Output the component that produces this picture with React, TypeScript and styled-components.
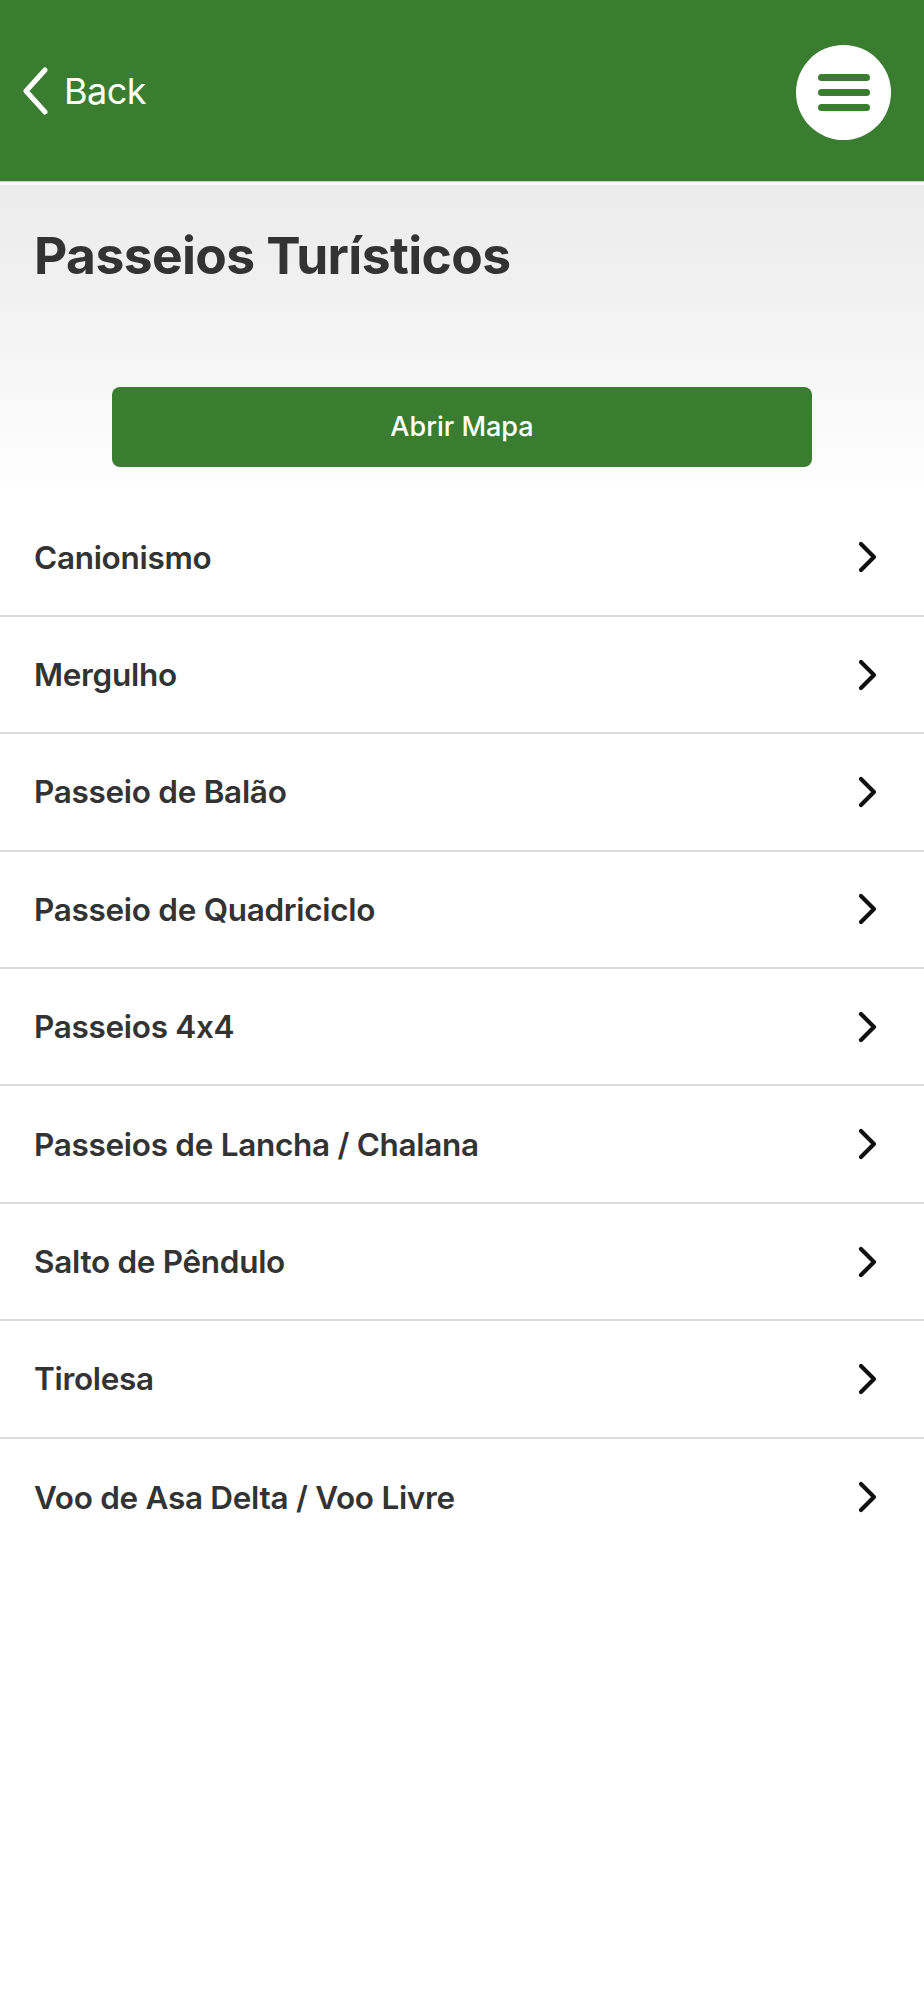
import React from "react";
import styled, { createGlobalStyle } from "styled-components";

const GREEN = "#3a7d31";

const GlobalStyle = createGlobalStyle`
  html, body { margin: 0; padding: 0; background: #ffffff; }
  body { font-family: Inter, "Noto Sans", "Liberation Sans", sans-serif; -webkit-font-smoothing: antialiased; }
  * { box-sizing: border-box; }
`;

const Page = styled.div`
  width: 924px;
  min-height: 2000px;
  background: #ffffff;
  display: flex;
  flex-direction: column;
`;

const Header = styled.header`
  height: 182px;
  background: ${GREEN};
  border-bottom: 1px solid #c4cbc2;
  display: flex;
  align-items: center;
  justify-content: space-between;
  padding: 0 33px 0 21px;
`;

const BackButton = styled.button`
  display: flex;
  align-items: center;
  gap: 15px;
  background: none;
  border: none;
  padding: 0;
  margin-top: 1px;
  color: #ffffff;
  font-family: Inter, "Liberation Sans", sans-serif;
  font-size: 36px;
  font-weight: 400;
  letter-spacing: -0.5px;
  cursor: pointer;
`;

const MenuButton = styled.button`
  width: 95px;
  height: 95px;
  border-radius: 50%;
  background: #ffffff;
  border: none;
  padding: 0;
  display: flex;
  flex-direction: column;
  align-items: center;
  justify-content: center;
  gap: 8px;
  margin-top: 3px;
  cursor: pointer;
`;

const MenuLine = styled.span`
  display: block;
  width: 52px;
  height: 7px;
  border-radius: 4px;
  background: ${GREEN};
`;

const Hero = styled.section`
  border-top: 3px solid #fbfbfb;
  background: linear-gradient(to bottom, #ebebeb 0%, #f3f3f3 45%, #ffffff 100%);
  height: 317.5px;
  padding: 40px 0 0 0;
  display: flex;
  flex-direction: column;
`;

const Title = styled.h1`
  margin: 0 0 0 34px;
  font-family: Inter, "Liberation Sans", sans-serif;
  font-size: 51.5px;
  line-height: 60px;
  font-weight: 700;
  letter-spacing: -0.6px;
  color: #333333;
`;

const MapButton = styled.button`
  align-self: center;
  margin-top: 101.5px;
  width: 700px;
  height: 80px;
  border: none;
  border-radius: 8px;
  background: ${GREEN};
  color: #ffffff;
  font-family: Inter, "Liberation Sans", sans-serif;
  font-size: 27px;
  font-weight: 500;
  cursor: pointer;
`;

const List = styled.ul`
  list-style: none;
  margin: 0;
  padding: 0;
`;

const Row = styled.li<{ $last?: boolean }>`
  height: 117.4px;
  display: flex;
  align-items: center;
  justify-content: space-between;
  padding: 0 46px 0 34px;
  border-bottom: ${(p) => (p.$last ? "none" : "2px solid #dcdcdc")};
`;

const RowLabel = styled.span`
  font-family: Inter, "Liberation Sans", sans-serif;
  font-size: 31.5px;
  font-weight: 600;
  letter-spacing: -0.3px;
  color: #333333;
`;

const BackChevron = () => (
  <svg width="28" height="48" viewBox="0 0 28 48" fill="none">
    <path d="M24 3 L5 24 L24 45" stroke="#ffffff" strokeWidth="5" strokeLinecap="round" strokeLinejoin="round" />
  </svg>
);

const RowChevron = () => (
  <svg width="20" height="32" viewBox="0 0 20 32" fill="none">
    <path d="M3 3 L16 16 L3 29" stroke="#111111" strokeWidth="4.2" strokeLinecap="round" strokeLinejoin="round" />
  </svg>
);

const items = [
  "Canionismo",
  "Mergulho",
  "Passeio de Balão",
  "Passeio de Quadriciclo",
  "Passeios 4x4",
  "Passeios de Lancha / Chalana",
  "Salto de Pêndulo",
  "Tirolesa",
  "Voo de Asa Delta / Voo Livre",
];

export default function App() {
  return (
    <Page>
      <GlobalStyle />
      <Header>
        <BackButton>
          <BackChevron />
          Back
        </BackButton>
        <MenuButton aria-label="Menu">
          <MenuLine />
          <MenuLine />
          <MenuLine />
        </MenuButton>
      </Header>
      <Hero>
        <Title>Passeios Turísticos</Title>
        <MapButton>Abrir Mapa</MapButton>
      </Hero>
      <List>
        {items.map((label, i) => (
          <Row key={label} $last={i === items.length - 1}>
            <RowLabel>{label}</RowLabel>
            <RowChevron />
          </Row>
        ))}
      </List>
    </Page>
  );
}
